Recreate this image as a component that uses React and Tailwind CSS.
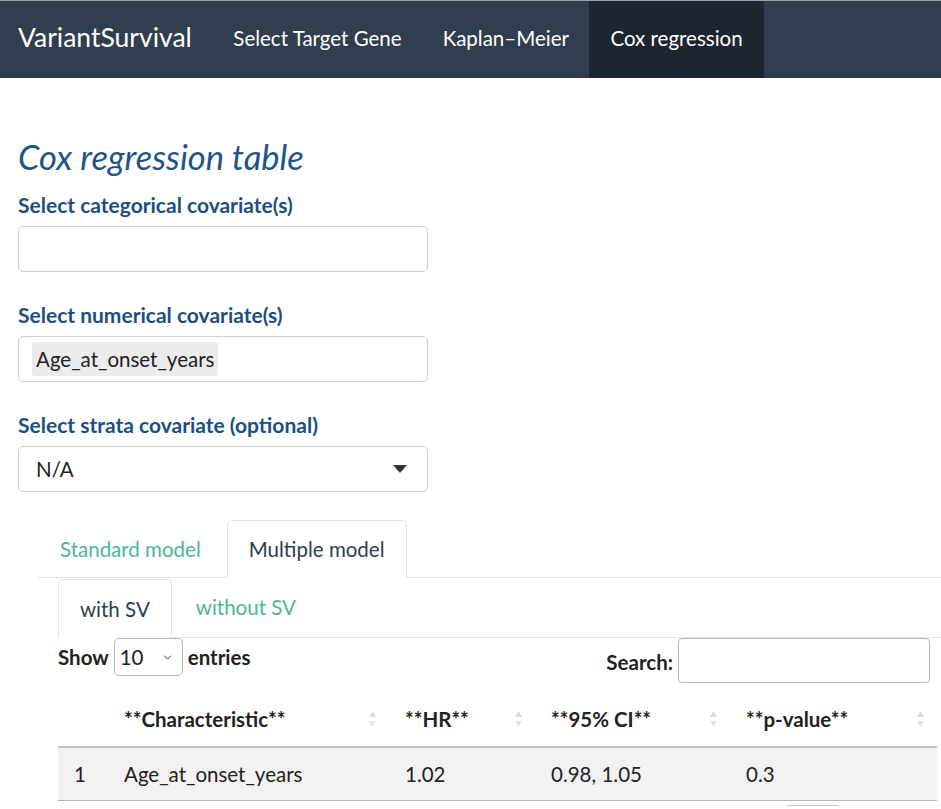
import { ChevronDown } from 'lucide-react';

const navLinks = ['Select Target Gene', 'Kaplan\u2013Meier'];

function SortIcon() {
  return (
    <svg width="9" height="20" viewBox="0 0 9 20" className="shrink-0">
      <path d="M4.5 2 L8 8 L1 8 Z" fill="#dcdcdc" />
      <path d="M4.5 18 L8 12 L1 12 Z" fill="#e6e6e6" />
    </svg>
  );
}

function HeaderCell({ label }) {
  return (
    <div className="flex items-center justify-between pl-4 pr-[12px] font-bold">
      <span>{label}</span>
      <SortIcon />
    </div>
  );
}

export default function App() {
  return (
    <div
      className="min-h-[809px] w-[941px] overflow-hidden bg-white text-[20.5px] text-[#222]"
      style={{ fontFamily: 'Lato, "Open Sans", sans-serif' }}
    >
      {/* navbar */}
      <nav className="flex h-[78px] items-stretch border-t border-[#9aa3ad] bg-[#313e4f] text-white">
        <div className="flex items-center pl-[18px] pr-[21px] pb-[3px] text-[26.5px]">VariantSurvival</div>
        {navLinks.map((link) => (
          <div key={link} className="flex items-center px-[20.5px] pb-[3px] text-[20.5px]">
            {link}
          </div>
        ))}
        <div className="flex items-center bg-[#1d2530] px-[21px] pb-[3px] text-[20.5px]">Cox regression</div>
      </nav>

      <main className="pl-[18px]">
        <h3 className="mt-[60px] text-[34.5px] leading-[38px] italic text-[#1f5586]">Cox regression table</h3>

        {[
          { label: 'Select categorical covariate(s)', content: null },
          {
            label: 'Select numerical covariate(s)',
            content: (
              <span className="rounded-[3px] bg-[#ececec] px-[4px] py-[2px]">Age_at_onset_years</span>
            ),
          },
          {
            label: 'Select strata covariate (optional)',
            content: 'select',
          },
        ].map((field, i) => (
          <div key={field.label} className={i === 0 ? 'mt-[15px]' : 'mt-[29px]'}>
            <div className="text-[21px] leading-[28px] font-bold text-[#1d4f7e]">{field.label}</div>
            <div className="mt-[7px] flex h-[46px] w-[410px] items-center rounded-[5px] border border-[#cfcfcf] pl-[13px] pr-[20px]">
              {field.content === 'select' ? (
                <div className="flex w-full items-center justify-between pl-[4px]">
                  <span>N/A</span>
                  <svg width="14" height="8" viewBox="0 0 14 8">
                    <path d="M0 0 L14 0 L7 8 Z" fill="#333" />
                  </svg>
                </div>
              ) : (
                field.content
              )}
            </div>
          </div>
        ))}

        {/* outer tabs */}
        <div className="mt-[29px] ml-[20px]">
          <div className="flex h-[57px] items-end border-b border-[#e4e4e4]">
            <div className="flex h-full items-center px-[22px] text-[#4bb796]">Standard model</div>
            <div className="ml-[4px] flex h-[58px] translate-y-[1px] items-center rounded-t-[5px] border border-b-0 border-[#e4e4e4] bg-white px-[21px] text-[#2c3e50]">
              Multiple model
            </div>
          </div>

          {/* inner tabs */}
          <div className="ml-[20px]">
            <div className="flex h-[60px] items-end border-b border-[#e4e4e4]">
              <div className="mt-[2px] flex h-[59px] translate-y-[1px] items-center rounded-t-[5px] border border-b-0 border-[#e4e4e4] bg-white px-[21px] text-[#2c3e50]">
                with SV
              </div>
              <div className="flex h-full items-center px-[24px] text-[#4bb796]">without SV</div>
            </div>

            <div className="flex w-[872px] items-start justify-between pr-0">
              <div className="flex items-center font-bold">
                <span>Show</span>
                <div className="mx-[5px] flex h-[38px] w-[69px] items-center justify-between rounded-[5px] border border-[#b8b8b8] pl-[5px] pr-[8px] font-normal">
                  <span>10</span>
                  <ChevronDown size={13} strokeWidth={1.5} />
                </div>
                <span>entries</span>
              </div>
              <div className="flex items-center font-bold">
                <span className="mt-[4px]">Search:</span>
                <div className="ml-[5px] h-[45px] w-[252px] rounded-[4px] border border-[#b8b8b8]" />
              </div>
            </div>

            {/* table */}
            <div className="mt-[9px] w-[879px]">
              <div className="grid h-[56px] grid-cols-[50px_281px_146px_195px_207px] items-center border-b-2 border-[#c4c4c4]">
                <div />
                <HeaderCell label="**Characteristic**" />
                <HeaderCell label="**HR**" />
                <HeaderCell label="**95% CI**" />
                <HeaderCell label="**p-value**" />
              </div>
              <div className="grid h-[53px] grid-cols-[50px_281px_146px_195px_207px] items-center border-b border-[#b5b5b5] bg-[#f2f2f2]">
                <div className="pl-4">1</div>
                <div className="pl-4">Age_at_onset_years</div>
                <div className="pl-4">1.02</div>
                <div className="pl-4">0.98, 1.05</div>
                <div className="pl-4">0.3</div>
              </div>
              <div className="mt-[4px] ml-[729px] h-[10px] w-[53px] rounded-t-[3px] border-t border-[#c8c8c8]" />
            </div>
          </div>
        </div>
      </main>
    </div>
  );
}
